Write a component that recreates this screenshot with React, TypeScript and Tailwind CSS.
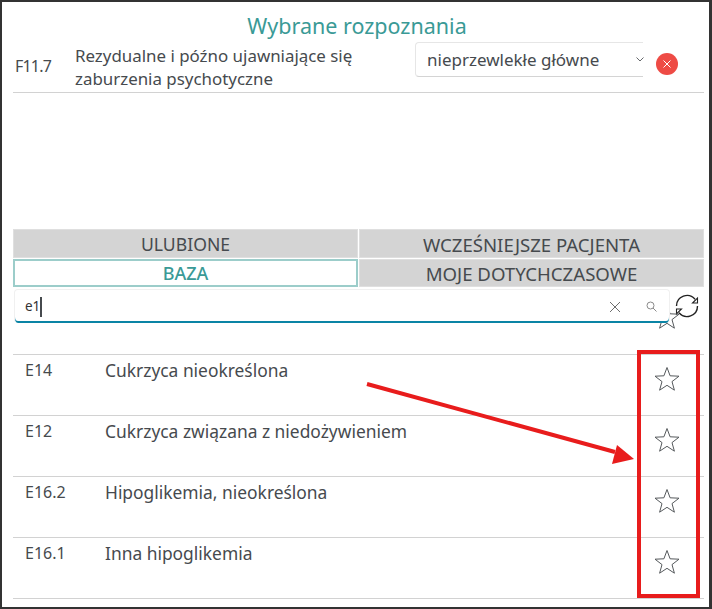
import React from "react";

const font = { fontFamily: '"Noto Sans", "Open Sans", sans-serif' };

function Star({ className = "" }: { className?: string }) {
  return (
    <svg width="26" height="26" viewBox="0 0 26 26" className={className}>
      <path
        d="M13 1.5 L16.1 9.8 L25 10.2 L18 15.6 L20.4 24.2 L13 19.3 L5.6 24.2 L8 15.6 L1 10.2 L9.9 9.8 Z"
        fill="none"
        stroke="#55595c"
        strokeWidth="1"
      />
    </svg>
  );
}

const rows = [
  ["E14", "Cukrzyca nieokreślona"],
  ["E12", "Cukrzyca związana z niedożywieniem"],
  ["E16.2", "Hipoglikemia, nieokreślona"],
  ["E16.1", "Inna hipoglikemia"],
];

function Tab({ label, active, tall, wide }: { label: string; active?: boolean; tall?: boolean; wide?: boolean }) {
  return (
    <div
      className={
        (tall ? "h-[29px] pt-[2px] " : "h-[28px] pt-[1px] ") +
        (active
          ? "flex items-center justify-center border-2 border-[#9ccdca] bg-white text-[18px] font-medium text-[#3a9a96]"
          : "flex items-center justify-center border border-[#dfdfdf] bg-[#d4d4d4] text-[#464a4e] " +
            (wide ? "text-[18.6px]" : "text-[17.6px]"))
      }
    >
      {label}
    </div>
  );
}

export default function App() {
  return (
    <div
      className="relative h-[609px] w-[712px] overflow-hidden border-t-2 border-r-[3px] border-b-2 border-l-2 border-[#333333] bg-white"
      style={font}
    >
      <div className="flex h-[39px] items-end justify-center pb-[1px] pl-[3px] text-[21.5px] leading-[28px] text-[#3a9a96]">
        Wybrane rozpoznania
      </div>

      <div className="ml-[11px] mr-[5px] flex h-[52px] items-start border-b border-[#d2d2d2]">
        <div className="mt-[14px] w-[62px] pl-[2px] text-[16px] leading-[22px] tracking-[-0.8px] text-[#464a4e]">F11.7</div>
        <div className="w-[340px] pt-[3px] text-[16.9px] leading-[23px] text-[#464a4e]">
          Rezydualne i późno ujawniające się
          <br />
          zaburzenia psychotyczne
        </div>
        <div className="mt-[1px] flex h-[35px] w-[228px] items-center justify-between rounded-l-[4px] border-y border-l border-[#e6e6e6] border-b-[#d4d4d4] pl-[11px] text-[17px] text-[#464a4e]">
          <span>nieprzewlekłe główne</span>
          <svg width="8" height="5" viewBox="0 0 8 5" className="-mr-[1px]">
            <path d="M0.5 0.5 L4 4 L7.5 0.5" fill="none" stroke="#66696c" strokeWidth="1" />
          </svg>
        </div>
        <div className="ml-[13px] mt-[12px] flex h-[22px] w-[22px] items-center justify-center rounded-full bg-[#ee4b45]">
          <svg width="10" height="10" viewBox="0 0 10 10">
            <path d="M1.5 1.5 L8.5 8.5 M8.5 1.5 L1.5 8.5" stroke="#ffffff" strokeWidth="1" />
          </svg>
        </div>
      </div>

      <div className="ml-[11px] mr-[5px] mt-[136px] grid grid-cols-2 gap-x-[1px] gap-y-[1px]">
        <Tab label="ULUBIONE" tall />
        <Tab label="WCZEŚNIEJSZE PACJENTA" tall wide />
        <Tab label="BAZA" active />
        <Tab label="MOJE DOTYCHCZASOWE" wide />
      </div>

      <div className="relative ml-[12px] mr-[5px] mt-[2px] flex h-[34px] items-center">
        <div className="relative z-10 flex h-[34px] w-[656px] items-center rounded-[4px] border border-[#f0f0f0] border-b-0 bg-white pl-[10px] pr-[12px] shadow-[inset_0_-2px_0_#0a84a5]">
          <span className="text-[13.5px] text-[#333333]">e1</span>
          <span className="h-[20px] w-[2px] bg-[#464a4e]" />
          <span className="flex-1" />
          <svg width="12" height="12" viewBox="0 0 12 12">
            <path d="M1 1 L11 11 M11 1 L1 11" stroke="#6e6e6e" strokeWidth="1" />
          </svg>
          <svg width="11" height="11" viewBox="0 0 11 11" className="ml-[25px]">
            <circle cx="4.5" cy="4.5" r="3.5" fill="none" stroke="#8a8a8a" strokeWidth="1" />
            <path d="M7 7 L10.5 10.5" stroke="#8a8a8a" strokeWidth="1" />
          </svg>
        </div>
        <svg width="24" height="24" viewBox="0 0 24 24" className="ml-[5px]">
          <path d="M1.5 12 A10.5 10.5 0 0 1 20 5.2 M22.5 12 A10.5 10.5 0 0 1 4 18.8" fill="none" stroke="#222222" strokeWidth="1.4" />
          <path d="M22.5 4 L22.5 9 L17.5 9 Z M1.5 20 L1.5 15 L6.5 15 Z" fill="none" stroke="#222222" strokeWidth="1.1" />
        </svg>
        <Star className="absolute left-[640px] top-[15px] z-0" />
      </div>

      <div className="ml-[11px] mr-[5px] mt-[31px] border-t border-[#d2d2d2]">
        {rows.map(([code, name]) => (
          <div key={code} className="flex h-[61px] border-b border-[#d2d2d2] text-[#464a4e]">
            <div className="w-[92px] pl-[12px] pt-[3px] text-[16px] leading-[24px]">{code}</div>
            <div className="flex-1 pt-[3px] text-[17.4px] leading-[24px]">{name}</div>
            <div className="flex w-[68px] items-start justify-center pr-[7px] pt-[11px]">
              <Star />
            </div>
          </div>
        ))}
      </div>

      <div className="absolute left-[635px] top-[348px] h-[248px] w-[63px] border-4 border-[#e81c1c]" />
      <svg width="712" height="609" className="pointer-events-none absolute left-[-2px] top-[-2px]">
        <path d="M367 384 L615 452" stroke="#e81c1c" strokeWidth="4" fill="none" />
        <path d="M634 459 L612 464 L617 445 Z" fill="#e81c1c" />
      </svg>
    </div>
  );
}
